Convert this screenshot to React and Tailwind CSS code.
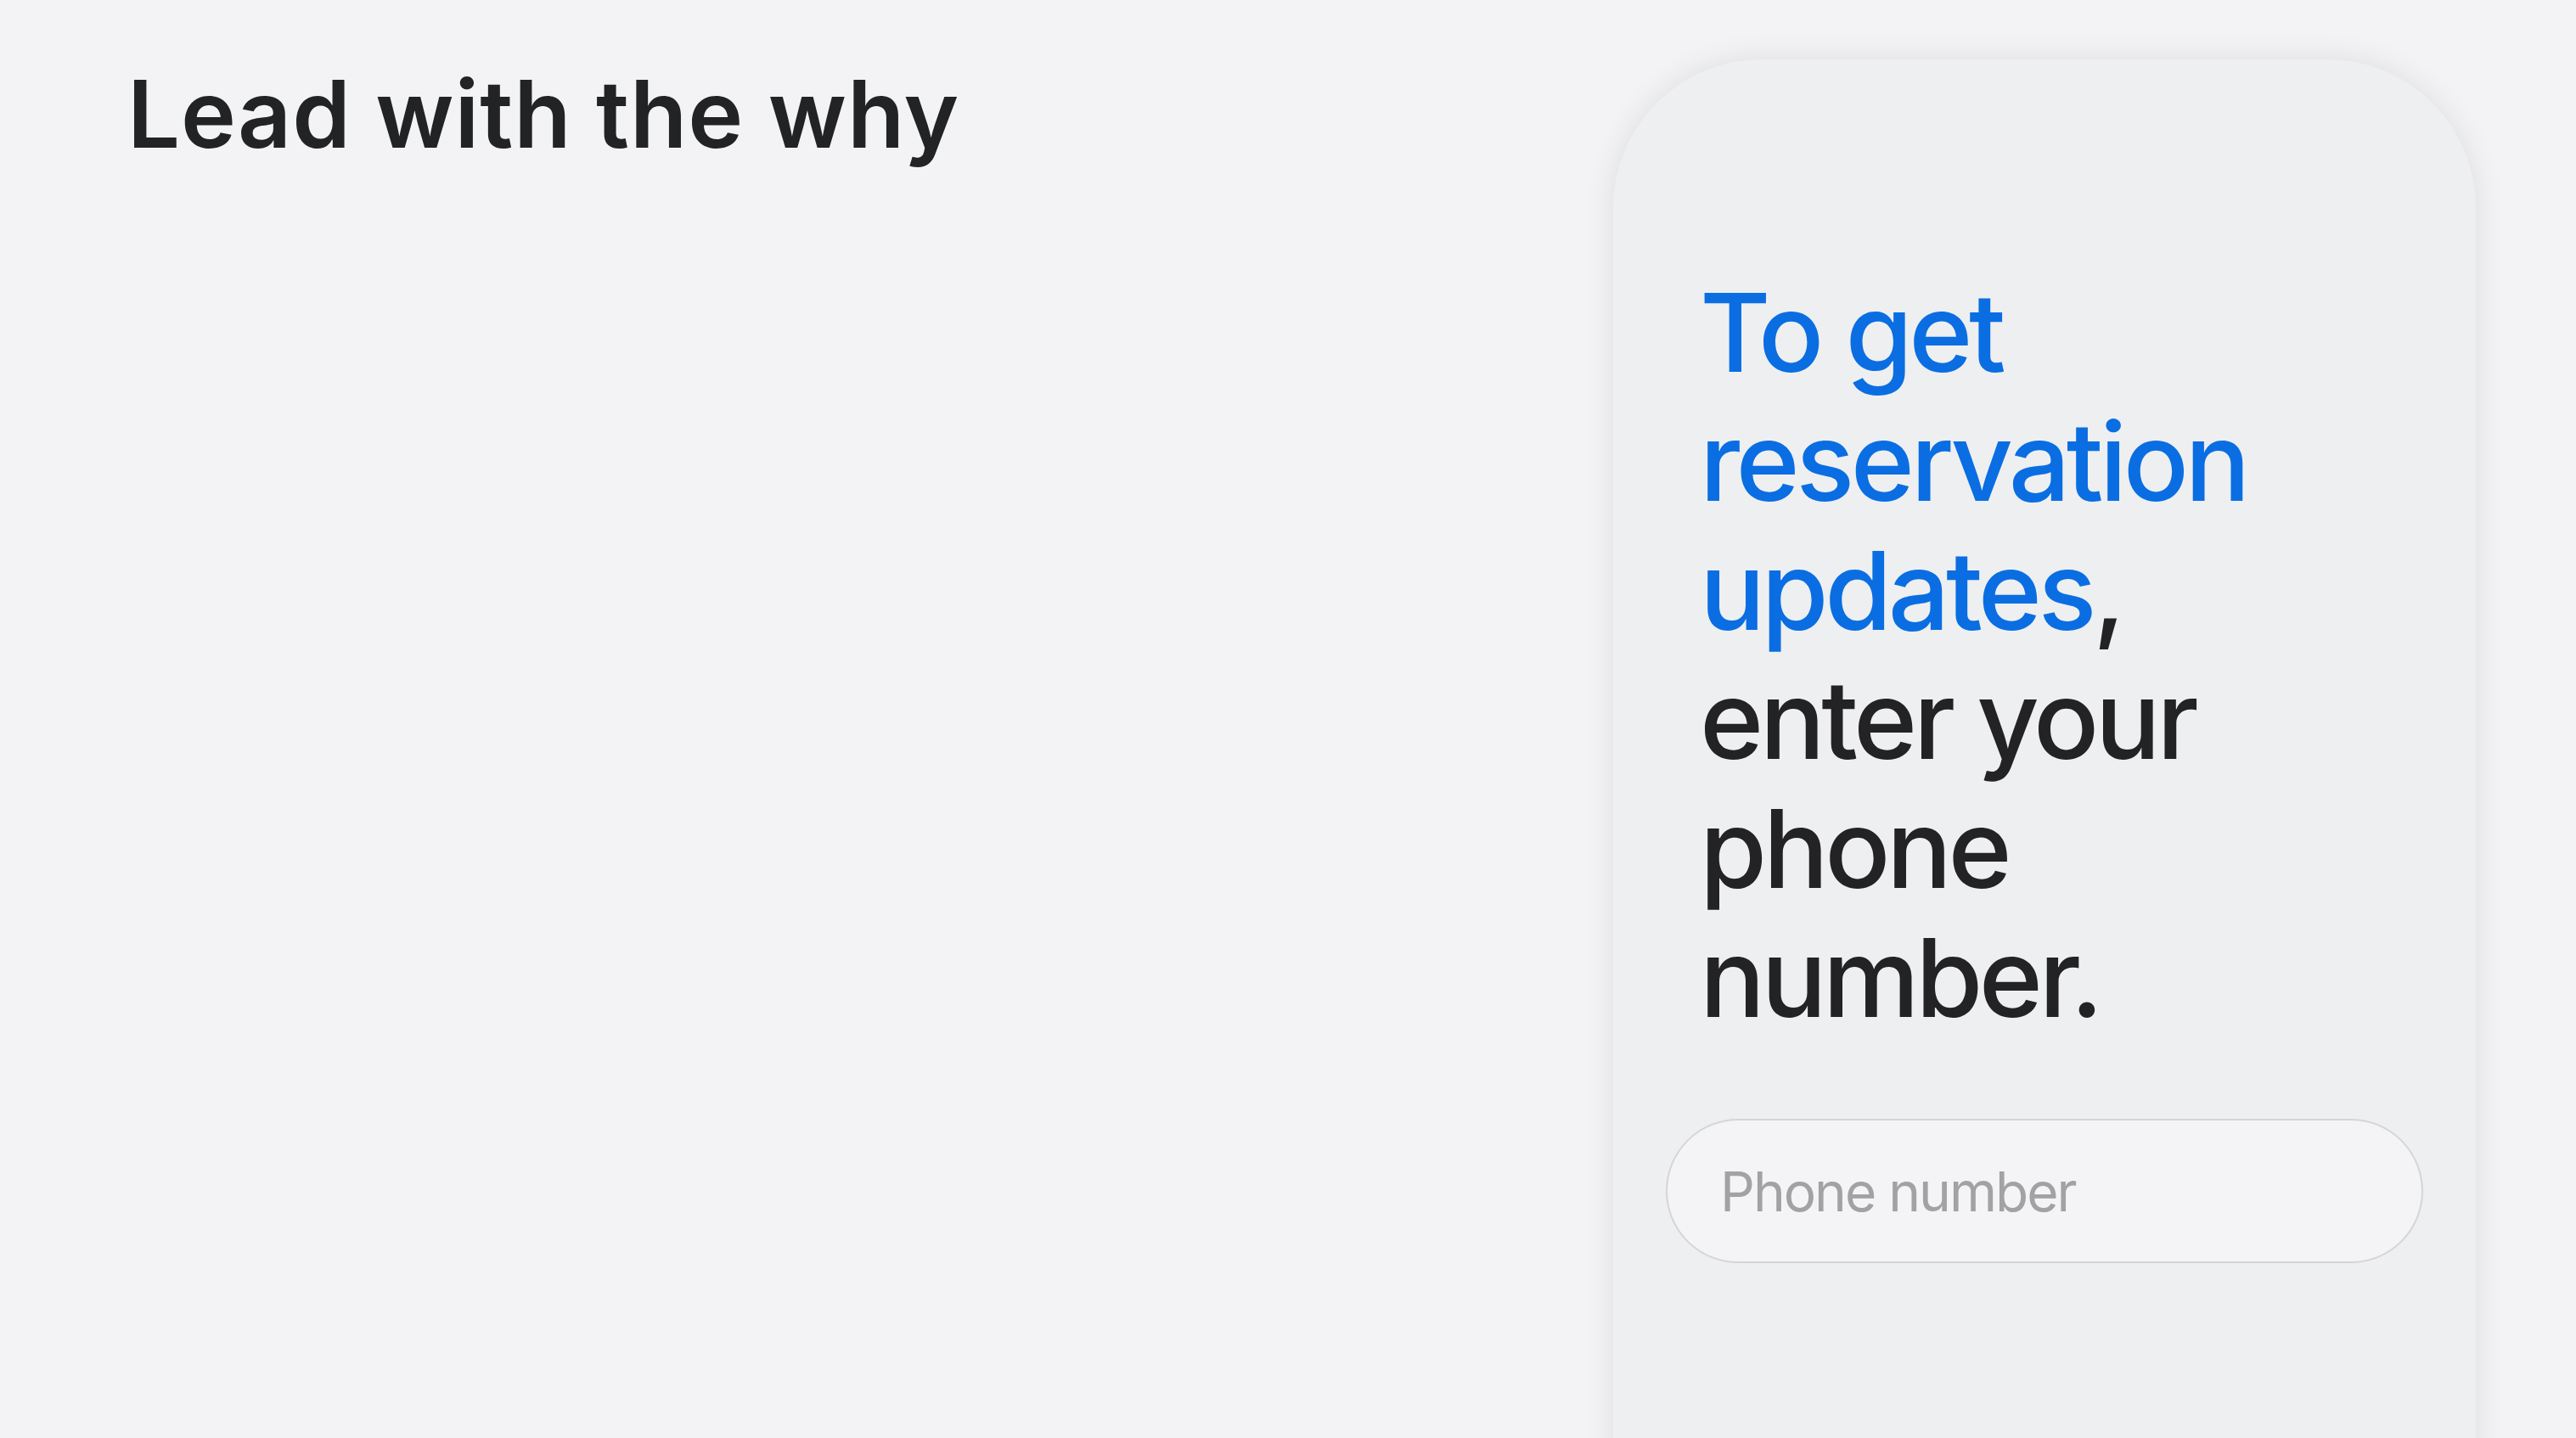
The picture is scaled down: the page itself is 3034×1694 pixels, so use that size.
import React from "react";

export default function App() {
  return (
    <div
      className="h-[1694px] w-[3034px] overflow-hidden bg-[#f3f3f5] flex"
      style={{ fontFamily: "Inter, 'Noto Sans', sans-serif" }}
    >
      {/* Slide title */}
      <div className="flex-1 pl-[150px] pt-[79px]">
        <h1 className="text-[110px] leading-[110px] font-semibold tracking-[0.9px] text-[#222325]">
          Lead with the why
        </h1>
      </div>

      {/* Phone mock */}
      <div className="mr-[118px] mt-[70px] w-[1016px] h-[1800px] rounded-t-[175px] bg-[#eeeff1] shadow-[0_0_36px_rgba(0,0,0,0.09)] px-[62px] pt-[246px]">
        <p className="pl-[40px] w-[850px] text-[128px] leading-[152px] font-medium tracking-[-4.5px] text-[#232325]">
          <span className="text-[#0a6ee2]">To get reservation updates</span>, enter your phone number.
        </p>
        <input
          type="tel"
          placeholder="Phone number"
          className="mt-[90px] block w-full h-[170px] rounded-full border-2 border-[#d5d5d8] bg-[#f4f4f6] pl-[62px] text-[64px] tracking-[-2px] text-[#232325] placeholder:text-[#a2a2a4] outline-none"
        />
      </div>
    </div>
  );
}
